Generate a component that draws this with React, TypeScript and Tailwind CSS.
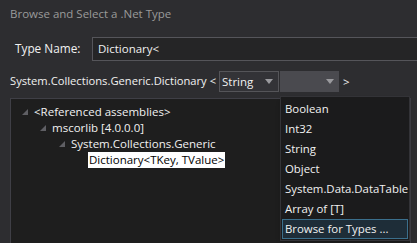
import React from "react";

const Expander = () => (
  <svg width="6" height="6" viewBox="0 0 6 6" className="shrink-0">
    <path d="M6 0 L6 6 L0 6 Z" fill="#5f5f64" />
  </svg>
);

const Caret = () => (
  <svg width="8" height="5" viewBox="0 0 8 5">
    <path d="M0 0 L8 0 L4 5 Z" fill="#9a9a9e" />
  </svg>
);

const options = ["Boolean", "Int32", "String", "Object", "System.Data.DataTable", "Array of [T]"];

const App = () => {
  return (
    <div
      className="w-[417px] h-[243px] bg-[#2d2d30] text-[#f1f1f1] text-[11.5px] whitespace-nowrap overflow-hidden relative"
      style={{ fontFamily: '"Open Sans", "Noto Sans", sans-serif' }}
    >
      <div className="pl-[10px] pt-[5px] h-[26px] text-[#9a9a9a] text-[11.5px] leading-[18px]">Browse and Select a .Net Type</div>

      <div className="flex items-center mt-[11px] h-[24px]">
        <div className="w-[92px] pl-[15px] text-[11.8px]">Type Name:</div>
        <div className="flex-1 h-[24px] bg-[#252526] border border-[#55555a] border-r-0 flex items-center pl-[5px]">
          Dictionary&lt;
        </div>
      </div>

      <div className="flex items-center mt-[10px] h-[21px] pl-[10px]">
        <span className="w-[209px] text-[11.2px]">System.Collections.Generic.Dictionary &lt;</span>
        <div className="w-[60px] h-[21px] bg-[#333337] border border-[#555559] flex items-center justify-between pl-[2px] pr-[5px]">
          <span>String</span>
          <Caret />
        </div>
        <div className="w-[59px] h-[21px] ml-[1px] bg-[#4a4a4f] flex items-center justify-end pr-[5px]">
          <Caret />
        </div>
        <span className="ml-[4px]">&gt;</span>
      </div>

      <div className="ml-[10px] mr-[6px] mt-[6px] h-[150px] bg-[#1e1e1e] border border-[#3f3f46] pt-[5px] leading-[16px]">
        <div className="flex items-center gap-[6px] pl-[11px]">
          <Expander />
          <span>&lt;Referenced assemblies&gt;</span>
        </div>
        <div className="flex items-center gap-[6px] pl-[29px]">
          <Expander />
          <span>mscorlib [4.0.0.0]</span>
        </div>
        <div className="flex items-center gap-[6px] pl-[48px]">
          <Expander />
          <span>System.Collections.Generic</span>
        </div>
        <div className="flex pl-[77px]">
          <span className="bg-white text-black px-[1px]">Dictionary&lt;TKey, TValue&gt;</span>
        </div>
      </div>

      <div className="absolute left-[280px] top-[96px] w-[130px] h-[145px] bg-[#1b1b1c] border border-[#333337] shadow-md pt-[2px] pl-[1px] text-[11.4px]">
        {options.map((o) => (
          <div key={o} className="h-[20px] leading-[20px] pl-[3px]">
            {o}
          </div>
        ))}
        <div className="h-[20px] leading-[18px] pl-[2px] mr-[1px] bg-[#1e2d38] border border-[#3b6f8c]">
          Browse for Types ...
        </div>
      </div>
    </div>
  );
};

export default App;
